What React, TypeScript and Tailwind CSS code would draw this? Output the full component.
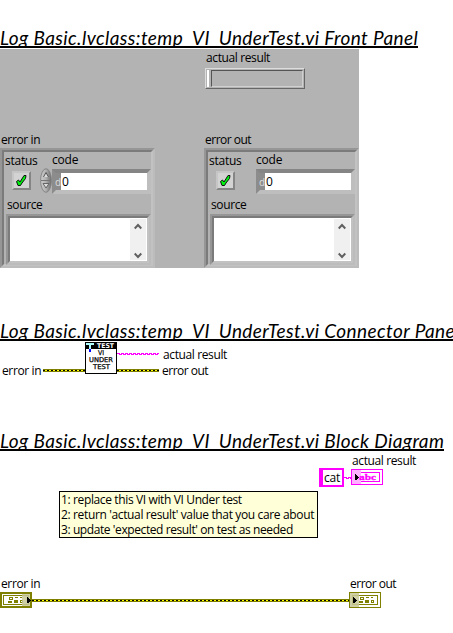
import type { ReactNode } from 'react';

const pageFont = "font-['Open_Sans','Noto_Sans',sans-serif]";

function Label({ children, className = '', tracking = 'tracking-[-0.38px]' }: { children: ReactNode; className?: string; tracking?: string }) {
  return <div className={`h-[15px] whitespace-nowrap text-[12px] leading-[15px] ${tracking} ${className}`}>{children}</div>;
}

function Heading({ children, className = '' }: { children: string; className?: string }) {
  return (
    <h2 className={`h-[22px] w-fit overflow-hidden whitespace-nowrap border-b-2 border-black font-['Lato',sans-serif] text-[19px] leading-[23px] tracking-[0.41px] italic ${className}`}>
      {children}
    </h2>
  );
}

function Bevel({ children, className = '' }: { children?: ReactNode; className?: string }) {
  return (
    <div className={`border-2 border-b-[#bcbcbc] border-l-[#969696] border-r-[#bcbcbc] border-t-[#969696] ${className}`}>
      <div className="flex h-full w-full border-2 border-b-[#c2c2c2] border-l-[#7b7b7b] border-r-[#c2c2c2] border-t-[#7b7b7b]">{children}</div>
    </div>
  );
}

function StatusLed() {
  return (
    <div className="h-[19px] w-[19px] border-2 border-b-[#858585] border-l-[#c6c6c6] border-r-[#858585] border-t-[#c6c6c6] bg-[#d3d3d3]">
      <svg width="15" height="15" viewBox="0 0 15 15">
        <path d="M2.5 8.5 L4.5 7 L6 9 L10 2.5 L12 2.5 L11.5 5.5 L8 10 L6.5 12.5 L4 12.5 Z" fill="#00f010" stroke="#111" strokeWidth="1" />
      </svg>
    </div>
  );
}

function Spinner() {
  return (
    <svg width="12" height="25" viewBox="0 0 12 25">
      <defs>
        <linearGradient id="spin" x1="0" x2="1">
          <stop offset="0" stopColor="#d0d0d0" />
          <stop offset="0.5" stopColor="#b0b0b0" />
          <stop offset="1" stopColor="#6c6c6c" />
        </linearGradient>
      </defs>
      <ellipse cx="6" cy="12.5" rx="5.4" ry="11.8" fill="url(#spin)" stroke="#808080" strokeWidth="0.9" />
      <path d="M1 12.5H11" stroke="#777" />
      <path d="M3.5 9L6 4.5L8.5 9" fill="#ddd" stroke="#555" />
      <path d="M3 15.5H9L6 20Z" fill="#ddd" stroke="#666" />
    </svg>
  );
}

function ErrorCluster({ spinner = false }: { spinner?: boolean }) {
  return (
    <Bevel className="h-[120px] w-[155px]">
      <div className="flex flex-col">
        <div className="flex">
          <div className="w-[36px] pl-[1px] pt-[1px]">
            <Label tracking="tracking-[-0.25px]">status</Label>
            <div className="pl-[7px] pt-[3px]"><StatusLed /></div>
          </div>
          <div className="flex">
            <div className="w-[12px] pt-[16px]">{spinner && <Spinner />}</div>
            <div>
              <Label tracking="tracking-[-0.2px]">code</Label>
              <div className="mt-[2px] flex h-[25px] w-[99px] border-4 border-b-[#bebebe] border-l-[#8c8c8c] border-r-[#bebebe] border-t-[#858585]">
                <div className="w-[5px] bg-[#8c8c8c] text-[10px] leading-[18px] text-[#ddd]"><span className="-ml-px">d</span></div>
                <div className="grow bg-white pl-px text-[12px] leading-[18px]">0</div>
              </div>
            </div>
          </div>
        </div>
        <Label className="mt-[3px] pl-[3px]">source</Label>
        <div className="mt-[2px] pl-[2px]">
          <Bevel className="h-[51px] w-[145px]">
            <div className="flex grow justify-end bg-white p-px">
              <div className="flex w-[16px] flex-col items-center justify-between bg-[#f0f0f0] pb-px pt-[4px]">
                <svg width="8" height="7" viewBox="0 0 8 7"><path d="M.7 5.5L4 2L7.3 5.5" fill="none" stroke="#606060" strokeWidth="2" /></svg>
                <svg width="8" height="7" viewBox="0 0 8 7"><path d="M.7 1.5L4 5L7.3 1.5" fill="none" stroke="#606060" strokeWidth="2" /></svg>
              </div>
            </div>
          </Bevel>
        </div>
      </div>
    </Bevel>
  );
}

function ErrorWire({ className = '' }: { className?: string }) {
  return (
    <div className={`h-[3px] bg-[#808000] py-px ${className}`}>
      <div className="h-px bg-[repeating-linear-gradient(90deg,#000_0_2px,#ffff00_2px_4px)]" />
    </div>
  );
}

function StringWire({ width }: { width: number }) {
  const steps = Array.from({ length: Math.ceil(width / 4) }, (_, i) => `M${i * 4} .5h3M${i * 4 + 2} 1.5h3`).join('');
  return <svg width={width} height="2" shapeRendering="crispEdges"><path d={steps} stroke="#ff00ff" /></svg>;
}

function ViIcon() {
  return (
    <svg width="32" height="32" viewBox="0 0 32 32" shapeRendering="crispEdges">
      <rect x=".5" y=".5" width="31" height="31" fill="#fff" stroke="#000" />
      <path d="M0 0h32v7H0z" />
      <path d="M1 1h8v2H6v4H4V3H1z" fill="#b0ffff" />
      <path d="M4 7h2v3H4z" fill="#0000ff" />
      <g fontFamily="DejaVu Sans, sans-serif" fontSize="6.6">
        <text x="12" y="6" fill="#fff" textLength="17" lengthAdjust="spacingAndGlyphs" fontWeight="bold">TEST</text>
        <g stroke="#000" strokeWidth=".25">
          <text x="13" y="13" textLength="6" lengthAdjust="spacingAndGlyphs">VI</text>
          <text x="4" y="20" textLength="24" lengthAdjust="spacingAndGlyphs">UNDER</text>
          <text x="8" y="27" textLength="17" lengthAdjust="spacingAndGlyphs">TEST</text>
        </g>
      </g>
    </svg>
  );
}

function StringTerminal() {
  return (
    <svg width="32" height="16" viewBox="0 0 32 16" shapeRendering="crispEdges">
      <rect x=".5" y=".5" width="31" height="15" fill="#fff" stroke="#ff00ff" />
      <rect x="3.5" y="3.5" width="25" height="9" fill="#fff" stroke="#ff00ff" />
      <path d="M1 1h9v14H1z" fill="#ffb0ff" />
      <text x="8" y="11" fill="#ff00ff" stroke="#ff00ff" strokeWidth=".3" fontFamily="Liberation Serif, serif" fontWeight="bold" fontSize="9" textLength="17" lengthAdjust="spacingAndGlyphs">abc</text>
      <path d="M4 5h1v1h1v1h1v1h1v1H7v1H6v1H4z" />
    </svg>
  );
}

function ErrorTerminal({ control = false }: { control?: boolean }) {
  return (
    <svg width="32" height="16" viewBox="0 0 32 16" shapeRendering="crispEdges">
      <path d="M0 0h32v16H0z" fill="#808000" />
      {control ? <path d="M2 2h28v12H2z" fill="#fff" /> : <path d="M1 1h30v14H1z" fill="#fff" />}
      <rect x="3.5" y="3.5" width="25" height="9" fill="none" stroke="#808000" />
      <g transform={control ? undefined : 'translate(2 0)'} fill="#808000">
        <path d="M9 5h4v3H9zM15 5h3v1h-3zM20 5h2v1h-2zM8 9h4v2H8zM14 8h4v3h-4zM20 8h3v3h-3z" />
        <path d="M10 6h2v1h-2zM21 9h1v1h-1z" fill="#fff" />
      </g>
      <path d={control ? 'M22 2h8v12h-8z' : 'M1 1h9v14H1z'} fill="#c8c896" fillOpacity=".85" />
      <path d={control ? 'M27 5h1v1h1v1h1v1h1v1h-1v1h-1v1h-2z' : 'M4 5h1v1h1v1h1v1h1v1H7v1H6v1H4z'} />
    </svg>
  );
}

export default function App() {
  return (
    <main className={`h-[633px] w-[453px] overflow-hidden bg-white pt-[26px] text-black ${pageFont}`}>
      <section className="h-[293px]">
        <Heading>Log Basic.lvclass:temp_VI_UnderTest.vi Front Panel</Heading>
        <div className="mt-px h-[219px] w-[359px] bg-[#b3b3b3] pt-px">
          <div className="pl-[205px]">
            <Label className="pl-px">actual result</Label>
            <div className="mt-[3px] flex h-[21px] w-[100px] border border-b-[#666] border-l-[#ddd] border-r-[#666] border-t-[#ddd] p-px">
              <div className="w-[2px] bg-white" />
              <div className="ml-[2px] grow border border-b-[#d0d0d0] border-l-[#555] border-r-[#d0d0d0] border-t-[#555]" />
            </div>
          </div>
          <div className="mt-[43px] flex gap-[49px]">
            <div><Label className="mb-px pl-px">error in</Label><ErrorCluster spinner /></div>
            <div><Label className="mb-px pl-px" tracking="tracking-[-0.5px]">error out</Label><ErrorCluster /></div>
          </div>
        </div>
      </section>
      <section className="h-[110px]">
        <Heading>Log Basic.lvclass:temp_VI_UnderTest.vi Connector Pane</Heading>
        <div className="mt-px flex h-[32px]">
          <div className="flex w-[85px] items-start pl-[2px] pt-[21px]">
            <Label className="w-[41px]">error in</Label><ErrorWire className="mt-[6px] w-[42px]" />
          </div>
          <ViIcon />
          <div>
            <div className="flex h-[21px] items-start pt-[5px]">
              <div className="flex w-[46px] pt-[6px]"><StringWire width={42} /></div><Label>actual result</Label>
            </div>
            <div className="flex"><ErrorWire className="mr-[3px] mt-[6px] w-[42px]" /><Label tracking="tracking-[-0.5px]">error out</Label></div>
          </div>
        </div>
      </section>
      <section>
        <Heading>Log Basic.lvclass:temp_VI_UnderTest.vi Block Diagram</Heading>
        <div className="h-[40px] pl-[319px] pt-[2px]">
          <Label className="pl-[33px]">actual result</Label>
          <div className="flex">
            <div className="h-[19px] w-[25px] border-2 border-l-4 border-[#ff00ff] pl-px text-[12px] leading-[15px] tracking-[-0.2px]">cat</div>
            <div className="flex w-[7px] pt-[9px]"><StringWire width={7} /></div>
            <div className="pt-px"><StringTerminal /></div>
          </div>
        </div>
        <div className="ml-[59px] h-[47px] w-[259px] border border-black bg-[#ffffd8] pl-px">
          <Label tracking="tracking-[-0.37px]">1: replace this VI with VI Under test</Label>
          <Label tracking="tracking-[-0.36px]">2: return 'actual result' value that you care about</Label>
          <Label tracking="tracking-[-0.41px]">3: update 'expected result' on test as needed</Label>
        </div>
        <div className="mt-[38px] flex"><Label className="w-[349px] pl-px">error in</Label><Label className="pl-px" tracking="tracking-[-0.5px]">error out</Label></div>
        <div className="mt-px flex items-center">
          <ErrorTerminal control /><ErrorWire className="w-[317px]" /><ErrorTerminal />
        </div>
      </section>
    </main>
  );
}
